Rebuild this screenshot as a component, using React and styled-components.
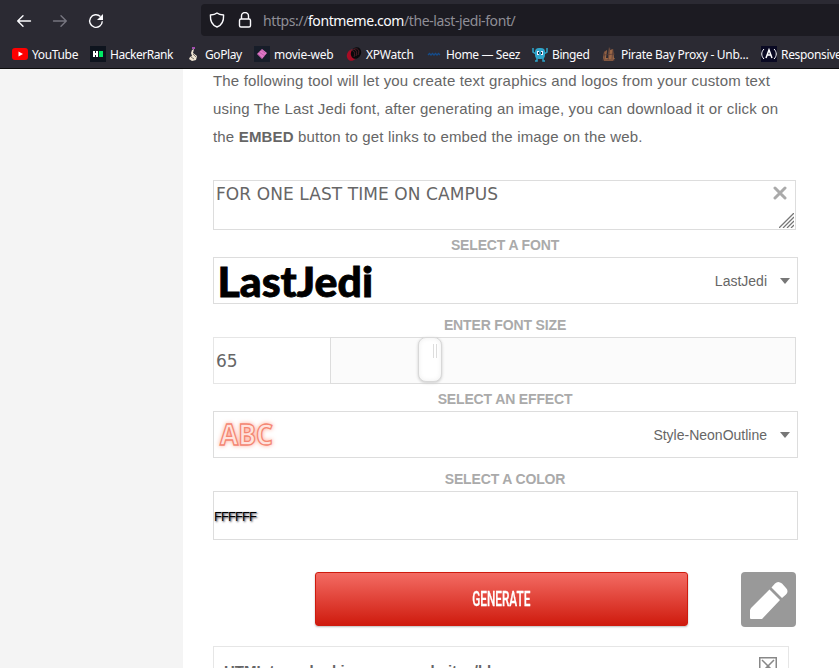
import React from "react";
import styled, { createGlobalStyle } from "styled-components";

const Global = createGlobalStyle`
  *{box-sizing:border-box}
  html,body{margin:0;height:668px;overflow:hidden;background:#fff}
  body{font-family:"Liberation Sans",Arial,sans-serif;color:#666}
  svg{display:block;flex:none}
`;
const Window = styled.div`width:839px;height:668px;display:flex;flex-direction:column;overflow:hidden;`;
const Chrome = styled.header`height:69px;flex:none;background:#2b2a33;border-bottom:1px solid #0c0c0d;font-family:"Noto Sans","Open Sans",sans-serif;color:#fbfbfe;overflow:hidden;`;
const NavRow = styled.div`display:flex;height:36px;padding:4px 0 0 16px;align-items:center;`;
const NavButtons = styled.div`display:flex;gap:20px;width:185px;padding-top:1px;`;
const AddressBar = styled.div`flex:1;height:32px;background:#1c1b22;border-radius:4px 0 0 4px;display:flex;align-items:center;padding-left:8px;gap:12px;`;
const Url = styled.div`font-size:14px;line-height:20px;letter-spacing:-0.41px;color:#8f8e96;white-space:nowrap;margin-left:-2px;padding-top:1px;`;
const Host = styled.span`color:#fbfbfe;`;
const Bookmarks = styled.div`display:flex;gap:12px;padding:10px 0 0 12px;`;
const Bookmark = styled.div`display:flex;gap:4px;align-items:center;height:16px;flex:none;`;
const BookmarkLabel = styled.span`width:${p => p.$width}px;font-size:12px;line-height:16px;letter-spacing:${p => p.$spacing}px;white-space:nowrap;padding-top:1px;`;

const Page = styled.div`flex:1;display:flex;min-height:0;`;
const Gutter = styled.aside`width:183px;background:#f4f4f4;flex:none;`;
const Content = styled.main`flex:1;padding-left:30px;`;
const Intro = styled.p`margin:-2px 0 29px;height:84px;width:600px;font-size:15px;line-height:28px;letter-spacing:0.17px;white-space:nowrap;`;
const Box = styled.div`width:${p => p.$width || 585}px;height:${p => p.$height || 47}px;border:1px solid #ddd;background:#fff;display:flex;align-items:center;`;
const MessageBox = styled(Box)`align-items:flex-start;justify-content:space-between;padding:2px 1px 1px 2px;font:17px/22px "DejaVu Sans",sans-serif;`;
const Message = styled.span`letter-spacing:0.08px;white-space:nowrap;`;
const BoxTools = styled.div`display:flex;flex-direction:column;align-items:flex-end;justify-content:space-between;height:100%;padding-top:3px;`;
const FieldLabel = styled.div`width:584px;height:${p => p.$height}px;padding-top:${p => p.$top}px;text-align:center;font-size:14px;font-weight:bold;line-height:16px;letter-spacing:-.15px;color:#aaa;`;
const SelectBox = styled(Box)`justify-content:space-between;padding:0 7px 0 5px;`;
const SelectValue = styled.div`display:flex;align-items:center;gap:13px;font-size:14px;line-height:18px;color:#666;`;
const Preview = styled.svg`overflow:visible;`;
const SizeField = styled.div`display:flex;width:583px;height:47px;`;
const SizeInput = styled.div`width:117px;border:1px solid #e6e6e6;border-right:0;padding:1px 2px 0;font:17px/45px "DejaVu Sans",sans-serif;`;
const Track = styled.div`flex:1;border:1px solid #ddd;background:#fbfbfb;padding-left:87px;`;
const Handle = styled.div`width:24px;height:45px;margin-top:-1px;border:1px solid #d8d8d8;border-radius:8px;background:#fff;box-shadow:0 1px 3px #ccc,inset 0 0 5px #eee;padding:6px 4px;display:flex;justify-content:flex-end;`;
const Grip = styled.div`width:4px;height:14px;border:solid #ddd;border-width:0 1px;`;
const ColorValue = styled.span`font:13px/16px "Liberation Sans",sans-serif;color:#000;text-shadow:1px 1px 2px #334;letter-spacing:-.95px;padding-top:2px;`;
const Actions = styled.div`display:flex;justify-content:space-between;width:583px;padding-left:102px;margin-top:32px;height:55px;`;
const Generate = styled.button`width:373px;height:54px;padding:0;border:1px solid #ce1b0e;border-radius:3px;background:linear-gradient(#f36b63,#cf1b0e);box-shadow:0 1px 2px #bbb;color:#fff;font:500 20px/52px Roboto,sans-serif;display:flex;justify-content:center;`;
const Condensed = styled.span`transform:scaleX(.59);-webkit-text-stroke:.3px #fff;`;
const EditButton = styled.div`width:55px;height:55px;border-radius:4px;background:#999;`;
const EmbedPanel = styled.section`width:576px;height:60px;margin-top:19px;border:1px solid #e6e6e6;padding:15px 10px;display:flex;justify-content:space-between;font-size:15px;line-height:18px;font-weight:bold;`;
const PanelTools = styled.div`margin-top:-5px;`;

const Icon16 = ({ children }) => <svg width="16" height="16" viewBox="0 0 16 16">{children}</svg>;
const Stroke = ({ color = "#fbfbfe", d, size = 16, w = 1.4 }) => (
  <svg width={size} height={size} viewBox={`0 0 ${size} ${size}`} fill="none" stroke={color} strokeWidth={w} strokeLinecap="round" strokeLinejoin="round"><path d={d} /></svg>
);

const bookmarks = [
  ["YouTube", 46, -0.35, <><rect x="0" y="2" width="16" height="12" rx="3" fill="#f00" /><path d="M6.5 5.5 11 8 6.5 10.5Z" fill="#fff" /></>],
  ["HackerRank", 63, -0.45, <><path d="M0 0h16v16H0z" fill="#0e141e" /><path d="M3 5h2v2h1V5h2v6H6V9H5v2H3z" fill="#fff" /><path d="M9 5h4v6H9z" fill="#00ea64" /></>],
  ["GoPlay", 37, -0.4, <><path d="M7 4 9 3 8 7 12 10 11 14 7 15 4 13 5 11 7 10 6 7Z" fill="#eee4d3" /><path d="m8 8 3 3m-5 0 3 2" stroke="#81796f" /><path d="M7 1h3v2H7z" fill="#a24eae" /></>],
  ["movie-web", 60, -0.25, <><path d="M0 0h16v16H0z" fill="#171d29" /><path d="m8 3 5 4-5 6-5-5z" fill="#df78c6" /><path d="m5 6 6 4M7 4l4 3M4 8l4 4" stroke="#b250a0" strokeWidth=".7" /></>],
  ["XPWatch", 48, -0.25, <><ellipse cx="6" cy="9" rx="5" ry="6" fill="#a90c25" transform="rotate(25 6 9)" /><ellipse cx="10" cy="7" rx="5" ry="6" fill="#08090b" transform="rotate(25 10 7)" /><path d="M3 5c4-2 7 1 5 6M5 4c4-2 7 1 5 6M8 3c4-1 6 1 4 6" fill="none" stroke="#642532" strokeWidth=".7" /></>],
  ["Home — Seez", 74, -0.36, <path d="m2 9 1.5-1.5L5 9l1.5-1.5L8 9l1.5-1.5L11 9l1.5-1.5L14 9" stroke="#154c8b" strokeWidth="1.3" fill="none" />],
  ["Binged", 37, -0.4, <><path d="M1 2v4l3 2M15 2v4l-3 2M5 12v3H3m8-3v3h2" stroke="#2fa5ca" strokeWidth="1.5" fill="none" /><rect x="3" y="2" width="10" height="11" rx="4" fill="#2fa5ca" /><path d="M5 5h2v4H5zm4 0h2v4H9z" fill="#eef" /><path d="M6 6h1v2H6zm3 0h1v2H9z" fill="#123" /></>],
  ["Pirate Bay Proxy - Unb...", 128, -0.29, <><path d="M2 12h12l-2 3H3zM3 6l3-2-1 8H2zM8 1l1 3 3-1 1 9H7z" fill="#9c6746" /><path d="m4 5-1 8M9 2l-2 12M12 3l-1 10M2 9l12-1M1 14h13" stroke="#553b36" strokeWidth=".7" /></>],
  ["Responsive", 62, -0.32, <><path d="M0 0h16v16H0z" fill="#0a0a23" /><path d="M3 3c-3 3-3 7 0 10M13 3c3 3 3 7 0 10" stroke="#fff" fill="none" /><path d="m5 12 3-8 3 8M6.5 9h3" stroke="#fff" strokeWidth="1.5" fill="none" /></>],
];

function Browser() {
  return <Chrome>
    <NavRow>
      <NavButtons>
        <Stroke d="M14.5 8H1.7M7 2.7 1.7 8 7 13.3" />
        <Stroke color="#777680" d="M1.5 8h12.8M9 2.7 14.3 8 9 13.3" />
        <svg width="16" height="16" viewBox="0 0 16 16" fill="none" stroke="#fbfbfe" strokeWidth="1.4"><path d="M14.3 8.2A6.3 6.3 0 1 1 12.4 3.500" /><path d="M15 1v6H9z" fill="#fbfbfe" stroke="none" /></svg>
      </NavButtons>
      <AddressBar>
        <Stroke d="M8 1C6.5 2.2 4 2.8 1.4 3c-.2 4.7.8 10 6.6 12 5.8-2 6.8-7.3 6.6-12C12 2.8 9.500 2.200 8 1Z" />
        <svg width="16" height="16" viewBox="0 0 16 16" fill="none" stroke="#fbfbfe" strokeWidth="1.4"><rect x="2.500" y="7" width="11" height="8" rx="1.5" /><path d="M4.500 7V4a3.500 3.500 0 0 1 7 0v3" /></svg>
        <Url>https://<Host>fontmeme.com</Host>/the-last-jedi-font/</Url>
      </AddressBar>
    </NavRow>
    <Bookmarks>{bookmarks.map(([name, width, spacing, icon]) => <Bookmark key={name}><Icon16>{icon}</Icon16><BookmarkLabel $width={width} $spacing={spacing}>{name}</BookmarkLabel></Bookmark>)}</Bookmarks>
  </Chrome>;
}

const Caret = () => <svg width="10" height="6"><path d="M0 0h10L5 6z" fill="#777" /></svg>;

export default function App() {
  return <><Global /><Window>
    <Browser />
    <Page><Gutter /><Content>
      <Intro>The following tool will let you create text graphics and logos from your custom text<br />using The Last Jedi font, after generating an image, you can download it or click on<br />the <b>EMBED</b> button to get links to embed the image on the web.</Intro>
      <MessageBox $width={583} $height={50}><Message>FOR ONE LAST TIME ON CAMPUS</Message>
        <BoxTools>
          <svg width="21" height="14"><path d="m2 2 10 10m0-10L2 12" stroke="#aaa" strokeWidth="3" strokeLinecap="round" /></svg>
          <svg width="15" height="15"><path d="M0 15 15 0M4 15 15 4M8 15l7-7M12 15l3-3" stroke="#777" strokeWidth="1.3" /></svg>
        </BoxTools>
      </MessageBox>
      <FieldLabel $height={27} $top={7}>SELECT A FONT</FieldLabel>
      <SelectBox>
        <Preview width="160" height="45"><text x="-1.500" y="38.500" textLength="155.500" lengthAdjust="spacingAndGlyphs" fontFamily="Lato" fontWeight="900" fontSize="41" fill="#000" stroke="#000" strokeWidth=".8">LastJedi</text></Preview>
        <SelectValue>LastJedi<Caret /></SelectValue>
      </SelectBox>
      <FieldLabel $height={33} $top={13}>ENTER FONT SIZE</FieldLabel>
      <SizeField><SizeInput>65</SizeInput><Track><Handle><Grip /></Handle></Track></SizeField>
      <FieldLabel $height={27} $top={7}>SELECT AN EFFECT</FieldLabel>
      <SelectBox>
        <Preview width="70" height="45"><defs><filter id="glow" x="-20%" y="-30%" width="140%" height="160%"><feGaussianBlur stdDeviation="2" /></filter></defs>
          <g fontFamily="Open Sans" fontWeight="700" fontSize="28"><text x="1" y="33" textLength="53" lengthAdjust="spacingAndGlyphs" fill="#ffb5a5" stroke="#ffb5a5" strokeWidth="2" filter="url(#glow)">ABC</text><text x="1" y="33" textLength="53" lengthAdjust="spacingAndGlyphs" fill="#ffe2dc" stroke="#f48672" strokeWidth="1.3">ABC</text></g></Preview>
        <SelectValue>Style-NeonOutline<Caret /></SelectValue>
      </SelectBox>
      <FieldLabel $height={33} $top={13}>SELECT A COLOR</FieldLabel>
      <Box $height={49}><ColorValue>FFFFFF</ColorValue></Box>
      <Actions><Generate><Condensed>GENERATE</Condensed></Generate>
        <EditButton><svg width="55" height="55" fill="#fff"><path d="M10 36 28.500 17.500 39 28 21 47H10Q9 47 9 46V38ZM30.500 15.500 34 11.500Q37 8.500 41 11.500L45 16Q48 19 45 22.500L41 26Z" /></svg></EditButton>
      </Actions>
      <EmbedPanel><span>HTML to embed image on websites/blogs</span><PanelTools><svg width="19" height="18" fill="none" stroke="#888" strokeWidth="1.5"><path d="M.75.75h16.500v16.500H.75zM3 3l12 12M15 3 3 15" /></svg></PanelTools></EmbedPanel>
    </Content></Page>
  </Window></>;
}
